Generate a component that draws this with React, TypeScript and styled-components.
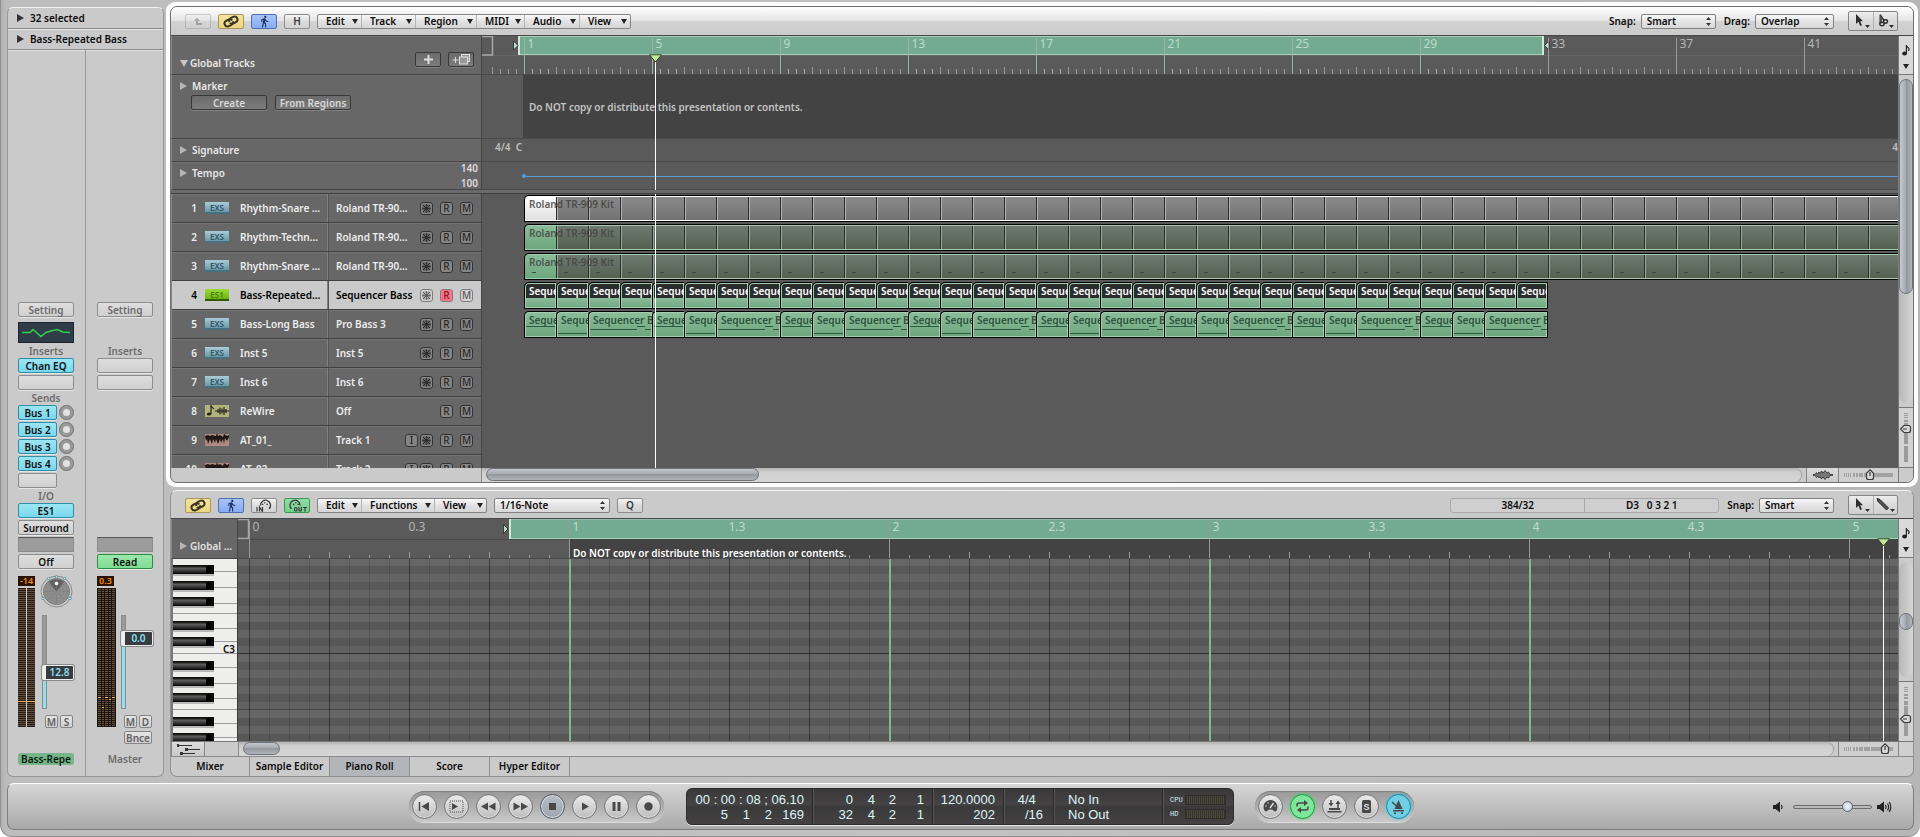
import React from "react";
import styled, { createGlobalStyle, css } from "styled-components";
import { MdDirectionsWalk } from "react-icons/md";

const UI_FONT = `"Noto Sans", "Open Sans", sans-serif`;
const LCD_FONT = `"Liberation Sans", Arial, sans-serif`;

const C = {
  panel: "#cacaca",
  header: "#676767",
  headerLine: "#454545",
  lane: "#5a5a5a",
  laneLine: "#4a4a4a",
  marker: "#434343",
  cycle: "#73ab92",
  cycleEdge: "#a5cfbb",
  text: "#0c0c0c",
};

const GlobalStyle = createGlobalStyle`
  * { box-sizing: border-box; }
  html, body { margin: 0; background: #fff; }
  body { font: 600 10px/12px ${UI_FONT}; color: ${C.text}; }
  button, input, select { font: inherit; color: inherit; margin: 0; }
  button { cursor: pointer; }
  ul { list-style: none; margin: 0; padding: 0; }
`;

/* ---------- frame ---------- */

const Window = styled.main`
  height: 100vh;
  min-height: 760px;
  display: flex;
  flex-direction: column;
  gap: 6px;
  padding: 2px 2px 6px 6px;
  border: solid #8f8f8f;
  border-width: 0 0 1px 1px;
  border-radius: 0 0 12px 12px;
  background: linear-gradient(90deg, #b2b2b2, #bdbdbd 6px, #c2c2c2 50%, #b6b6b6);
  overflow: hidden;
`;

const Workspace = styled.div`
  flex: 1;
  min-height: 0;
  display: flex;
  gap: 2px;
`;

const Editors = styled.div`
  flex: 1;
  min-width: 0;
  display: flex;
  flex-direction: column;
  gap: 3px;
`;

/* ---------- shared controls ---------- */

const Row = styled.div<{ $gap?: number }>`
  display: flex;
  align-items: center;
  gap: ${(p) => p.$gap ?? 0}px;
`;

const Triangle = styled.i<{ $dir?: "down" | "right"; $color?: string }>`
  width: 0;
  height: 0;
  flex: none;
  border-style: solid;
  ${(p) =>
    p.$dir === "down"
      ? css`border-width: 7px 4px 0; border-color: ${p.$color ?? "#333"} transparent transparent;`
      : css`border-width: 4px 0 4px 7px; border-color: transparent transparent transparent ${p.$color ?? "#333"};`}
`;

const tints: Record<string, string> = {
  plain: "linear-gradient(#f4f4f4, #dcdcdc 50%, #d2d2d2)",
  yellow: "linear-gradient(#f3e3a0, #ecd67c)",
  blue: "linear-gradient(#a9c3f5, #86acf5)",
  green: "linear-gradient(#94dba6, #6fd089)",
};
const edges: Record<string, string> = {
  plain: "#8c8c8c",
  yellow: "#a8975c",
  blue: "#4f6fb5",
  green: "#3d9858",
};

const ToolButton = styled.button<{ $tint?: string; $faded?: boolean }>`
  width: 26px;
  height: 15px;
  padding: 0;
  display: grid;
  place-items: center;
  border: 1px solid ${(p) => edges[p.$tint ?? "plain"]};
  border-radius: 2px;
  background: ${(p) => tints[p.$tint ?? "plain"]};
  color: #3a3a3a;
  opacity: ${(p) => (p.$faded ? 0.4 : 1)};
`;

const MenuBar = styled.div`
  display: flex;
  height: 15px;
  border: 1px solid #858585;
  border-radius: 2px;
  background: linear-gradient(#f8f8f8, #e2e2e2 50%, #d6d6d6);
`;

const MenuButton = styled.button<{ $w: number }>`
  width: ${(p) => p.$w}px;
  padding: 0 3px 0 8px;
  display: flex;
  align-items: center;
  justify-content: space-between;
  border: 0;
  border-right: 1px solid #b4b4b4;
  background: none;
  &:last-child { border-right: 0; }
`;

const MenuArrow = styled.i`
  border: solid transparent;
  border-width: 5px 3px 0;
  border-top-color: #222;
`;

const SelectBox = styled.span<{ $w: number }>`
  position: relative;
  display: block;
  width: ${(p) => p.$w}px;
  height: 15px;
  svg { position: absolute; right: 5px; top: 3px; pointer-events: none; }
  select {
    appearance: none;
    display: block;
    width: 100%;
    height: 15px;
    padding: 0 14px 0 5px;
    border: 1px solid #808080;
    border-radius: 2px;
    background: linear-gradient(#f8f8f8, #e4e4e4 50%, #d8d8d8);
  }
`;

const FieldLabel = styled.label`
  display: flex;
  align-items: center;
  gap: 5px;
`;

const ToolPair = styled.div`
  display: flex;
  width: 50px;
  height: 20px;
  border: 1px solid #858585;
  border-radius: 2px;
  background: linear-gradient(#ededed, #dadada 50%, #cfcfcf);
  button {
    flex: 1;
    padding: 0;
    border: 0;
    background: none;
    display: grid;
    place-items: center;
  }
  button + button { border-left: 1px solid #b0b0b0; }
`;

/* ---------- icons ---------- */

const LinkIcon = () => (
  <svg width="16" height="13" viewBox="0 0 16 13" fill="none">
    <g stroke="#3b3420" strokeWidth="2">
      <rect x="1.500" y="4.800" width="8.500" height="6" rx="3" transform="rotate(-25 6 8)" />
      <rect x="6" y="2.200" width="8.500" height="6" rx="3" transform="rotate(-25 10 5)" />
    </g>
    <path d="M5 8.300l6-3.200" stroke="#efe0a0" strokeWidth="1" />
  </svg>
);
const UpIcon = () => (
  <svg width="10" height="9" viewBox="0 0 10 9" fill="none" stroke="#555" strokeWidth="2">
    <path d="M9 7H4V3" />
    <path d="M4 .5L1 4h6z" fill="#555" stroke="none" />
  </svg>
);
const WalkIcon = () => <MdDirectionsWalk size={13} color="#1c3364" />;
const MidiIcon = ({ dir }: { dir: "in" | "out" }) => (
  <svg width="20" height="13" viewBox="0 0 20 13" fill="none" stroke="#3a3a3a" strokeWidth="1.300">
    {dir === "in" ? (
      <>
        <path d="M6.500 6.500A5 5 0 1 1 15 9.800" />
        <path d="M3 8v4.500M5.500 12.500V8l3 4.500V8" strokeWidth="1.200" />
      </>
    ) : (
      <>
        <path d="M4.500 9.800A5 5 0 1 1 13 6.500" />
        <rect x="7.500" y="8.500" width="2.500" height="3.500" rx="1" strokeWidth="1.100" />
        <path d="M12 8v3.500q1.200 1 2.400 0V8M16 8.500h4M18 8.500v4" strokeWidth="1.200" />
      </>
    )}
    <g fill="#3a3a3a" stroke="none" transform={dir === "in" ? "translate(2 0)" : undefined}>
      <circle cx="8.800" cy="3.800" r=".8" />
      <circle cx="6.600" cy="5.400" r=".8" />
      <circle cx="11.200" cy="5.400" r=".8" />
    </g>
  </svg>
);
const Stepper = () => (
  <svg width="5" height="9" viewBox="0 0 5 9" fill="#333">
    <path d="M2.500 0L5 3H0zM2.500 9L5 6H0z" />
  </svg>
);
const PointerIcon = () => (
  <svg width="20" height="16" viewBox="0 0 20 16" fill="#2e2e2e">
    <path d="M5 1v10l2.400-2.200L9.200 13l1.800-.8-1.800-4H12z" />
    <path d="M14 12h5l-2.500 3z" />
  </svg>
);
const ScissorsIcon = () => (
  <svg width="20" height="16" viewBox="0 0 20 16" fill="none" stroke="#2e2e2e" strokeWidth="1.400">
    <path d="M5.500 1.500v8.500M5.500 2.500L9.500 8" />
    <path d="M4.500 1.500l3 4-1 5h-2z" fill="#555" stroke="none" />
    <ellipse cx="7" cy="11" rx="2.200" ry="1.700" />
    <ellipse cx="10.500" cy="8.500" rx="2" ry="1.700" />
    <path d="M14 12h5l-2.500 3z" fill="#2e2e2e" stroke="none" />
  </svg>
);
const PencilIcon = () => (
  <svg width="20" height="16" viewBox="0 0 20 16">
    <path d="M2 1.500l1 3 8.500 8.500 2-2L5 2.500z" fill="#555" stroke="#222" />
    <path d="M15 12h5l-2.500 3z" fill="#2e2e2e" />
  </svg>
);
const FreezeIcon = () => (
  <svg width="9" height="9" viewBox="0 0 9 9" stroke="currentColor" fill="none">
    <path d="M4.500 0v9M0 4.500h9" strokeWidth=".8" />
    <path d="M1 1l7 7M8 1L1 8" strokeWidth="1.200" />
    <path d="M3 .5l1.500 1.500L6 .5M3 8.500L4.500 7 6 8.500M.5 3L2 4.500.5 6M8.500 3L7 4.500 8.500 6" strokeWidth=".9" />
  </svg>
);
const NoteIcon = () => (
  <svg width="8" height="12" viewBox="0 0 8 12">
    <ellipse cx="2.600" cy="9.500" rx="2.400" ry="1.900" fill="#222" />
    <path d="M4.400 9.500V1q.4 2 2 2.800 1.200 1.200 0 3" stroke="#222" strokeWidth="1.200" fill="none" />
  </svg>
);
const WaveIcon = () => (
  <svg width="20" height="10" viewBox="0 0 20 10">
    <path
      d="M0 4.600h2l1.500-2 1 1.500L6 2l1 1.500L8.500 1l1.500 2L12 .5l2 2.500 1.500-1 1.500 2.600h3v.8h-3L15.500 8 14 7l-2 2.500L10 7 8.500 9 7 6.500 6 8 4.500 6l-1 1.500-1.500-2H0z"
      fill="#777"
      stroke="#3a3a3a"
      strokeWidth=".9"
    />
  </svg>
);
const SpeakerIcon = ({ waves }: { waves: number }) => (
  <svg width="15" height="12" viewBox="0 0 15 12" fill="none" stroke="#222" strokeWidth="1.200">
    <path d="M0 4h2.500L7 .5v11L2.500 8H0z" fill="#222" stroke="none" />
    <path d="M8.500 4q1.200 2 0 4" />
    {waves > 1 && <path d="M10.500 2.500q2.200 3.500 0 7M12.300 1q3 5 0 10" />}
  </svg>
);

/* ---------- inspector ---------- */

const Inspector = styled.aside`
  width: 157px;
  margin-top: 5px;
  display: flex;
  flex-direction: column;
  border: 1px solid #979797;
  border-top-color: #f2f2f2;
  border-radius: 6px;
  background: ${C.panel};
`;

const Disclosure = styled.button`
  height: 21px;
  padding: 0 0 1px 9px;
  display: flex;
  align-items: center;
  gap: 6px;
  border: 0;
  border-bottom: 1px solid #8a8a8a;
  background: none;
  box-shadow: 0 1px #e2e2e2;
`;

const Channels = styled.div`
  flex: 1;
  display: grid;
  grid-template-columns: 77px 1fr;
  align-items: end;
`;

const Channel = styled.section`
  display: grid;
  height: 100%;
  padding: 0 10px 11px;
  align-content: end;
  align-items: start;
  grid-template-columns: 56px;
  grid-template-rows: 20px 23px 13px 17px 17px 13px 17px 17px 17px 17px 17px 13px 17px 17px 17px 21px 178px 12px;
  & + & { border-left: 1px solid #9a9a9a; padding-left: 11px; }
`;

const Slot = styled.button<{ $row: number; $kind?: "cyan" | "green" | "dim" | "short" }>`
  grid-row: ${(p) => p.$row};
  width: ${(p) => (p.$kind === "short" ? 39 : 56)}px;
  height: 15px;
  padding: 0;
  border: 1px solid #8d8d8d;
  border-radius: 2px;
  background: linear-gradient(#dedede, #d0d0d0);
  box-shadow: 0 1px #e6e6e6;
  color: ${(p) => (p.$kind === "dim" ? "#6c6c6c" : "#111")};
  line-height: 12px;
  white-space: nowrap;
  ${(p) => p.$kind === "cyan" && css`background: linear-gradient(#9be6f4, #7bd7ec); border-color: #2f8fa8;`}
  ${(p) => p.$kind === "green" && css`background: linear-gradient(#9be8ab, #7fdc93); border-color: #2c8c45;`}
`;

const Caption = styled.span<{ $row: number }>`
  grid-row: ${(p) => p.$row};
  line-height: 13px;
  text-align: center;
  color: #6c6c6c;
`;

const SendRow = styled.div<{ $row: number }>`
  grid-row: ${(p) => p.$row};
  display: flex;
  gap: 2px;
`;
const SendButton = styled(Slot)`
  width: 39px;
`;
const SendKnob = styled.span`
  width: 15px;
  height: 15px;
  border: 4px solid #999;
  border-radius: 50%;
  background: #e2e2e2;
  outline: 1px solid #7b7b7b;
  outline-offset: -1px;
`;

const Well = styled.div<{ $row: number }>`
  grid-row: ${(p) => p.$row};
  height: 15px;
  border: 1px solid #8c8c8c;
  border-top-color: #555;
  background: #9c9c9c;
`;

const EqThumb = styled.div`
  grid-row: 2;
  height: 21px;
  background: #303c48;
  border: 1px solid #1d262e;
`;

const FaderArea = styled.div`
  grid-row: 17;
  display: flex;
  gap: 5px;
`;
const MeterColumn = styled.div`
  width: 17px;
  padding-top: 1px;
`;
const Peak = styled.output`
  display: block;
  height: 10px;
  margin-bottom: 2px;
  background: #2a1200;
  color: #f08a10;
  font-size: 9px;
  line-height: 10px;
  text-align: center;
`;
const Meters = styled.div`
  display: flex;
  gap: 1px;
  height: 139px;
`;
const Meter = styled.div<{ $peak: number }>`
  flex: 1;
  background:
    linear-gradient(#ffb050, #ffb050) 0 ${(p) => p.$peak}px / 100% 1px no-repeat,
    repeating-linear-gradient(#241a14 0 1px, #65513f 1px 2px);
`;
const DenseMeters = styled(Meters)`
  width: 19px;
  padding: 0 1px;
  background: #1b120c;
`;
const FaderColumn = styled.div`
  flex: 1;
`;
const KnobSlot = styled.div`
  height: 40px;
`;
const Fader = styled.div<{ $top: number }>`
  position: relative;
  width: 5px;
  height: 94px;
  margin: 0 0 6px 2px;
  border: 1px solid #8b8b8b;
  background: linear-gradient(#9a9a9a ${(p) => p.$top}px, #8fdfee ${(p) => p.$top}px);
  input {
    position: absolute;
    left: -2px;
    top: 0;
    width: 30px;
    height: 94px;
    opacity: 0;
    writing-mode: vertical-lr;
    direction: rtl;
  }
`;
const FaderCap = styled.output<{ $top: number }>`
  position: absolute;
  left: -1px;
  top: ${(p) => p.$top}px;
  width: 32px;
  height: 15px;
  border: 1px solid #ededed;
  border-left-width: 4px;
  border-radius: 2px;
  background: #363c40;
  box-shadow: 0 0 0 1px #8a8a8a;
  color: #8fdff0;
  line-height: 13px;
  text-align: center;
`;
const SmallButtons = styled.div`
  display: flex;
  justify-content: flex-end;
  gap: 2px;
  padding-right: 1px;
  margin-bottom: 3px;
`;
const SmallButton = styled.button<{ $wide?: boolean }>`
  width: ${(p) => (p.$wide ? 28 : 13)}px;
  height: 13px;
  padding: 0;
  border: 1px solid #858585;
  border-radius: 2px;
  background: linear-gradient(#e4e4e4, #d0d0d0);
  color: #606060;
  line-height: 10px;
`;
const ChannelName = styled.span<{ $active?: boolean }>`
  grid-row: 18;
  border-radius: 3px;
  background: ${(p) => (p.$active ? "#76b489" : "none")};
  color: ${(p) => (p.$active ? "#0d1a10" : "#6c6c6c")};
  text-align: center;
`;

const PanKnob = () => (
  <svg width="33" height="33" viewBox="0 0 33 33" fill="none">
    <circle cx="16.500" cy="16.500" r="15.500" stroke="#8a8a8a" />
    <circle cx="16.500" cy="16.500" r="13" fill="#8f8f8f" stroke="#777" />
    <path d="M16.500 16.500L9 7a13 13 0 0 1 15 0z" fill="#5b5b5b" />
    {[4, 7, 10].map((r) => (
      <circle key={r} cx="16.500" cy="16.500" r={r} stroke="#7a7a7a" strokeWidth=".6" />
    ))}
    <path d="M16.500 4v25M4 16.500h25M8 8l17 17M25 8L8 25" stroke="#7c7c7c" strokeWidth=".5" />
    <circle cx="16.500" cy="8.500" r="1.800" fill="#fff" />
    {[[16.5, 2], [8.5, 3.5], [24.5, 3.5], [3, 23.5], [30, 23.5]].map(([x, y]) => (
      <circle key={`${x}-${y}`} cx={x} cy={y} r="1.200" fill="#e8e8e8" stroke="#3f90a5" strokeWidth=".8" />
    ))}
  </svg>
);

function InspectorPanel() {
  return (
    <Inspector>
      <Disclosure><Triangle />32 selected</Disclosure>
      <Disclosure><Triangle />Bass-Repeated Bass</Disclosure>
      <Channels>
        <Channel aria-label="Bass-Repeated">
          <Slot $row={1} $kind="dim">Setting</Slot>
          <EqThumb>
            <svg width="54" height="19" viewBox="0 0 54 19" fill="none" stroke="#2fd04a" strokeWidth="1.500">
              <path d="M3 9.500h8l3-3 8 7 5-4 5-1.500 6-1.500 6 2.500 7 .5" />
            </svg>
          </EqThumb>
          <Caption $row={3}>Inserts</Caption>
          <Slot $row={4} $kind="cyan">Chan EQ</Slot>
          <Slot $row={5} aria-label="Empty insert" />
          <Caption $row={6}>Sends</Caption>
          {[1, 2, 3, 4].map((n) => (
            <SendRow key={n} $row={6 + n}>
              <SendButton $row={1} $kind="cyan">Bus {n}</SendButton>
              <SendKnob />
            </SendRow>
          ))}
          <Slot $row={11} $kind="short" aria-label="Empty send" />
          <Caption $row={12}>I/O</Caption>
          <Slot $row={13} $kind="cyan">ES1</Slot>
          <Slot $row={14}>Surround</Slot>
          <Well $row={15} />
          <Slot $row={16}>Off</Slot>
          <FaderArea>
            <MeterColumn>
              <Peak>-14</Peak>
              <Meters><Meter $peak={113} /><Meter $peak={113} /></Meters>
            </MeterColumn>
            <FaderColumn>
              <KnobSlot><PanKnob /></KnobSlot>
              <Fader $top={58}>
                <FaderCap $top={49}>12.8</FaderCap>
                <input type="range" aria-label="Bass volume" defaultValue={40} />
              </Fader>
              <SmallButtons><SmallButton>M</SmallButton><SmallButton>S</SmallButton></SmallButtons>
            </FaderColumn>
          </FaderArea>
          <ChannelName $active>Bass-Repe</ChannelName>
        </Channel>
        <Channel aria-label="Master">
          <Slot $row={1} $kind="dim">Setting</Slot>
          <Caption $row={3}>Inserts</Caption>
          <Slot $row={4} aria-label="Empty insert 1" />
          <Slot $row={5} aria-label="Empty insert 2" />
          <Well $row={15} />
          <Slot $row={16} $kind="green">Read</Slot>
          <FaderArea>
            <MeterColumn>
              <Peak>0.3</Peak>
              <DenseMeters>
                {[109, 119, 109, 111, 109].map((p, i) => <Meter key={i} $peak={p} />)}
              </DenseMeters>
            </MeterColumn>
            <FaderColumn>
              <KnobSlot />
              <Fader $top={28}>
                <FaderCap $top={15}>0.0</FaderCap>
                <input type="range" aria-label="Master volume" defaultValue={75} />
              </Fader>
              <SmallButtons><SmallButton>M</SmallButton><SmallButton>D</SmallButton></SmallButtons>
              <SmallButtons><SmallButton $wide>Bnce</SmallButton></SmallButtons>
            </FaderColumn>
          </FaderArea>
          <ChannelName>Master</ChannelName>
        </Channel>
      </Channels>
    </Inspector>
  );
}

/* ---------- scroll and zoom strips ---------- */

const thumb = css`
  border: 1px solid #6f7378;
  border-radius: 8px;
`;
const HScroll = styled.div<{ $gap: number }>`
  flex: 1;
  min-width: 0;
  margin-right: ${(p) => p.$gap}px;
  padding: 0 4px;
  border-left: 1px solid #8a8a8a;
  border-radius: 0 8px 8px 0;
  background: linear-gradient(#b4b4b4, #cfcfcf 30%, #d6d6d6);
  box-shadow: 1px 0 #9a9a9a;
`;
const HThumb = styled.div<{ $w: number }>`
  width: ${(p) => p.$w}px;
  height: 13px;
  ${thumb}
  background: linear-gradient(#c3c6cb, #a7aab1 45%, #94989f 50%, #b1b4ba);
`;
const ScrollStrip = styled.div`
  flex: none;
  display: flex;
  height: 14px;
  background: ${C.panel};
`;
const StripCell = styled.div<{ $w: number }>`
  position: relative;
  flex: none;
  width: ${(p) => p.$w}px;
  display: grid;
  place-items: center;
  border-left: 1px solid #858585;
  background: #cfcfcf;
  input { position: absolute; inset: 0; width: 100%; height: 100%; margin: 0; opacity: 0; }
`;
const StripButton = styled.button<{ $w: number }>`
  flex: none;
  width: ${(p) => p.$w}px;
  padding: 0;
  display: grid;
  place-items: center;
  border: 0;
  border-left: 1px solid #858585;
  background: linear-gradient(#dcdcdc, #c8c8c8);
`;
const SideColumn = styled.div`
  flex: none;
  width: 15px;
  display: flex;
  flex-direction: column;
  border-left: 1px solid #7a7a7a;
  background: #cbcbcb;
`;
const NoteBox = styled.button`
  height: 39px;
  padding: 8px 0 5px;
  display: flex;
  flex-direction: column;
  align-items: center;
  justify-content: space-between;
  border: 0;
  border-bottom: 1px solid #7a7a7a;
  background: #d9d9d9;
`;
const VScroll = styled.div<{ $pad: number }>`
  flex: 1;
  min-height: 0;
  padding-top: ${(p) => p.$pad}px;
  margin: 4px 0;
  border-radius: 7px;
  background: linear-gradient(90deg, #b8b8b8, #d6d6d6);
`;
const VThumb = styled.div<{ $h: number }>`
  height: ${(p) => p.$h}px;
  ${thumb}
  background: linear-gradient(90deg, #c6c9ce, #a5a8ae 50%, #92969d 52%, #b3b6bc);
`;
const VZoom = styled.div`
  position: relative;
  height: 60px;
  display: grid;
  place-items: center;
  border-top: 1px solid #7a7a7a;
  background: #d3d3d3;
  input { position: absolute; inset: 0; width: 100%; height: 100%; margin: 0; opacity: 0; writing-mode: vertical-lr; }
`;
const Corner = styled.div`
  height: 15px;
  border-top: 1px solid #7a7a7a;
`;

const HZoomArt = ({ at }: { at: number }) => (
  <svg width="50" height="12" viewBox="0 0 50 12">
    <g fill="#a2a2a2">
      {[0, 2, 4, 6].map((x) => <rect key={x} x={x} y="4" width="1" height="4" />)}
      {[9, 12].map((x) => <rect key={x} x={x} y="4" width="2" height="4" />)}
      <rect x="15" y="4" width="4" height="4" />
      <rect x="20" y="4" width="6" height="4" />
      <rect x="27" y="4" width="22" height="4" />
    </g>
    <path d={`M${at} .8l-3.500 3.500v4.200q0 2 2 2h3q2 0 2-2V4.300zM${at} 3v4`} fill="#d8d8d8" stroke="#3c3c3c" strokeWidth="1.200" />
  </svg>
);
const VZoomArt = ({ at }: { at: number }) => (
  <svg width="14" height="50" viewBox="0 0 14 50">
    <g fill="#9c9c9c">
      {[0, 2, 4, 7, 10].map((y) => <rect key={y} x="5" y={y} width="4" height={y > 5 ? 2 : 1} />)}
      <rect x="5" y="14" width="4" height="4" />
      <rect x="5" y="19" width="4" height="12" />
      <rect x="5" y="33" width="4" height="16" />
    </g>
    <path d={`M1.500 ${at}l3.500 -3.500h4.500q2 0 2 2v3q0 2 -2 2H5zM4 ${at}h4`} fill="#d8d8d8" stroke="#3c3c3c" strokeWidth="1.200" />
  </svg>
);

/* ---------- arrange window ---------- */

const ArrangeFrame = styled.section`
  flex: 1;
  min-height: 0;
  display: flex;
  padding: 4px;
  border-radius: 9px;
  background: #fdfdfd;
`;
const ArrangeInner = styled.div`
  flex: 1;
  min-width: 0;
  display: flex;
  flex-direction: column;
  border: 1px solid #6e6e6e;
  border-radius: 7px;
  background: ${C.panel};
  overflow: hidden;
`;
const Toolbar = styled.header<{ $bright?: boolean }>`
  flex: none;
  height: ${(p) => (p.$bright ? 29 : 28)}px;
  padding: ${(p) => (p.$bright ? 0 : 1)}px 15px 0 14px;
  display: flex;
  align-items: center;
  gap: 7px;
  border-bottom: 1px solid #484848;
  background: ${(p) => (p.$bright ? "linear-gradient(#fff, #e4e4e4 50%, #d2d2d2 52%, #cbcbcb)" : C.panel)};
`;
const ToolbarEnd = styled.div`
  margin-left: auto;
  display: flex;
  align-items: center;
  gap: 8px;
  ${ToolPair} { margin-left: 6px; }
`;
const EditorBody = styled.div`
  flex: 1;
  min-height: 0;
  display: flex;
`;
const Stack = styled.div<{ $w?: number }>`
  position: relative;
  ${(p) => (p.$w ? css`flex: none; width: ${p.$w}px;` : css`flex: 1; min-width: 0;`)}
  display: flex;
  flex-direction: column;
`;

const GlobalRow = styled.div<{ $h: number }>`
  flex: none;
  height: ${(p) => p.$h}px;
  padding: 5px 7px 0 8px;
  border-bottom: 1px solid ${C.headerLine};
  border-right: 1px solid ${C.headerLine};
  border-left: 1px solid #888;
  box-shadow: inset 0 1px #727272;
  background: ${C.header};
  color: #e8e8e8;
`;
const GlobalTop = styled(GlobalRow)`
  display: flex;
  align-items: center;
  gap: 7px;
  padding-top: 9px;
  ${Row}:first-child { flex: 1; padding-top: 7px; }
`;
const DarkButton = styled.button<{ $w: number }>`
  width: ${(p) => p.$w}px;
  height: 15px;
  padding: 0;
  display: grid;
  place-items: center;
  border: 1px solid #383838;
  border-radius: 2px;
  background: linear-gradient(#6b6b6b, #7b7b7b);
  box-shadow: 0 1px #808080;
  color: #d8d8d8;
  line-height: 12px;
`;
const MarkerButtons = styled.div`
  display: flex;
  gap: 8px;
  padding: 3px 0 0 11px;
`;
const TempoRow = styled(GlobalRow)`
  display: flex;
  justify-content: space-between;
  align-items: flex-start;
  padding-top: 0;
  padding-right: 3px;
  ${Row} { padding-top: 5px; }
`;
const TempoScale = styled.div`
  display: grid;
  gap: 3px;
  text-align: right;
  color: #dcdcdc;
`;
const Band = styled.div`
  flex: none;
  position: relative;
  z-index: 3;
  height: 4px;
  background: #6b6b6b;
  border-bottom: 1px solid #3d3d3d;
`;

const TrackList = styled.ul`
  flex: 1;
  min-height: 0;
  overflow: hidden;
  background: ${C.header};
  border-left: 1px solid #888;
  border-right: 1px solid ${C.headerLine};
`;
const TrackRow = styled.li<{ $selected?: boolean }>`
  height: 29px;
  padding: 0 8px 0 0;
  display: grid;
  grid-template-columns: 25px 32px 107px 1fr auto;
  align-items: center;
  border-bottom: 1px solid #404040;
  box-shadow: inset 0 1px #757575;
  color: #ededed;
  ${(p) => p.$selected && css`background: ${C.panel}; color: #000; box-shadow: none;`}
`;
const TrackNumber = styled.span`
  text-align: right;
`;
const TrackName = styled.span`
  height: 28px;
  line-height: 28px;
  white-space: nowrap;
  padding-left: 11px;
  margin-right: 8px;
  border-right: 1px solid #808080;
  box-shadow: 1px 0 #555;
`;
const TrackTarget = styled.span`
  white-space: nowrap;
`;
const TrackButtons = styled.div`
  display: flex;
  gap: 7px;
`;
const Tiny = styled.button<{ $on?: boolean; $light?: boolean; $tight?: boolean }>`
  width: 13px;
  height: 13px;
  padding: 0;
  margin-right: ${(p) => (p.$tight ? -5 : 0)}px;
  display: grid;
  place-items: center;
  border: 1px solid ${(p) => (p.$light ? "#7d7d7d" : "#333")};
  border-radius: 3px;
  background: ${(p) => (p.$on ? "#ff7389" : p.$light ? "#d2d2d2" : "#858585")};
  color: ${(p) => (p.$on ? "#7c1222" : p.$light ? "#5a5a5a" : "#2a2a2a")};
  line-height: 11px;
  font-weight: 500;
`;
const BadgeSlot = styled.span`
  display: grid;
  padding-left: 8px;
`;
const Badge = styled.span<{ $green?: boolean }>`
  height: 12px;
  border-bottom: 2px solid ${(p) => (p.$green ? "#2f5a08" : "#47707f")};
  background: ${(p) => (p.$green ? "linear-gradient(#9ada3a, #6fb512)" : "linear-gradient(#a9cbd8, #6b98aa)")};
  color: ${(p) => (p.$green ? "#4a8010" : "#345562")};
  font-size: 8px;
  line-height: 11px;
  text-align: center;
`;
const WaveBadge = ({ rewire }: { rewire?: boolean }) => (
  <svg width="24" height="14" viewBox="0 0 24 14">
    <rect y="1" width="24" height="12" fill={rewire ? "#b3b37c" : "#b08a80"} />
    {rewire ? (
      <g>
        <ellipse cx="4" cy="10" rx="2.200" ry="1.500" fill="#222" />
        <path d="M6 10V1q.5 2.500 3 4M10 7h14M13 5v4M15 3.500v7M17 4.500v5M19 3v8M21 5v4" stroke="#222" strokeWidth="1.200" fill="none" />
      </g>
    ) : (
      <path d="M0 3l1 5 1-2 1 5 2-5 1 3 1 2 1-5 2 4 1-4 2 5 2-5 1 4 2-4 1 5 1-6 2 3 2-4V2l-2 1-3-2-1 3-3-2-2 1-1-3-1 3-4-1-2 1-2-1z" fill="#1e1614" />
    )}
  </svg>
);

type Track = { n: number; badge: "EXS" | "ES1" | "rewire" | "audio"; name: string; target: string };
const tracks: Track[] = [
  { n: 1, badge: "EXS", name: "Rhythm-Snare ...", target: "Roland TR-90..." },
  { n: 2, badge: "EXS", name: "Rhythm-Techn...", target: "Roland TR-90..." },
  { n: 3, badge: "EXS", name: "Rhythm-Snare ...", target: "Roland TR-90..." },
  { n: 4, badge: "ES1", name: "Bass-Repeated...", target: "Sequencer Bass" },
  { n: 5, badge: "EXS", name: "Bass-Long Bass", target: "Pro Bass 3" },
  { n: 6, badge: "EXS", name: "Inst 5", target: "Inst 5" },
  { n: 7, badge: "EXS", name: "Inst 6", target: "Inst 6" },
  { n: 8, badge: "rewire", name: "ReWire", target: "Off" },
  { n: 9, badge: "audio", name: "AT_01_", target: "Track 1" },
  { n: 10, badge: "audio", name: "AT_02_", target: "Track 2" },
];

const Ruler = styled.div<{ $h: number }>`
  position: relative;
  flex: none;
  height: ${(p) => p.$h}px;
  overflow: hidden;
  background: ${C.lane};
  border-bottom: 1px solid ${C.laneLine};
  svg { display: block; }
  text { font: 12px ${UI_FONT}; }
`;

const ArrangeRuler = () => {
  const bars = Array.from({ length: 46 }, (_, i) => i);
  return (
    <Ruler $h={39}>
      <svg width="100%" height="38">
        <rect y="19" width="100%" height="1" fill="#666" />
        <path d="M0 0.500H10.500V19H0" fill="none" stroke="#a8a8a8" strokeWidth="1.500" />
        <rect x="38" y="0" width="1022" height="19" fill={C.cycle} />
        <path d="M38 .5h1022M38 18.500h1022" stroke={C.cycleEdge} />
        <path d="M37 0v19M1061 0v19" stroke="#cfe8da" strokeWidth="2" />
        <path d="M31.500 5l4.500 4.500-4.500 4.500z" fill="#b8e0c8" stroke="#222" strokeWidth=".8" />
        <path d="M1067 5l-4.500 4.500 4.500 4.500z" fill="#b8e0c8" stroke="#222" strokeWidth=".8" />
        {bars.map((b) => {
          const x = 10.5 + b * 32;
          const major = b % 4 === 1;
          return (
            <g key={b} stroke={major && b < 33 ? "#9fb0a6" : "#9a9a9a"}>
              <path d={`M${x} ${major ? 2 : 31}V38`} />
              {[8, 16, 24].map((d) => <path key={d} d={`M${x + d} 33V38`} />)}
              {major && (
                <text x={x + 3} y="12" fill={b < 33 ? "#bddccb" : "#b5b5b5"} stroke="none">{b}</text>
              )}
            </g>
          );
        })}
      </svg>
    </Ruler>
  );
};

const Playhead = styled.div<{ $x: number; $top: number }>`
  position: absolute;
  z-index: 2;
  top: ${(p) => p.$top}px;
  bottom: 0;
  left: ${(p) => p.$x}px;
  width: 1px;
  background: #fff;
  pointer-events: none;
  svg { position: absolute; left: -6px; top: -1px; }
`;
const PlayheadCap = () => (
  <svg width="13" height="9" viewBox="0 0 13 9">
    <path d="M.5 .8h12L6.500 8z" fill="#c4e89c" stroke="#2d4a22" strokeWidth="1" />
  </svg>
);

const MarkerLane = styled.div`
  flex: none;
  height: 64px;
  padding-left: 41px;
  background: ${C.lane};
  border-bottom: 1px solid ${C.laneLine};
  div { height: 63px; padding-left: 6px; background: ${C.marker}; color: #c4c4c4; line-height: 64px; }
`;
const SignatureLane = styled.div`
  flex: none;
  height: 23px;
  padding: 2px 0 0 13px;
  display: flex;
  justify-content: space-between;
  background: ${C.lane};
  border-bottom: 1px solid ${C.laneLine};
  color: #bfbfbf;
`;
const TempoLane = styled.div`
  flex: none;
  height: 28px;
  padding: 12px 0 0 40px;
  background: ${C.lane};
  border-bottom: 1px solid ${C.laneLine};
  div { display: flex; align-items: center; height: 4px; }
  i { width: 4px; height: 4px; border-radius: 50%; background: #45a0f0; }
  b { flex: 1; height: 1px; background: #5b9bd0; }
`;

const Lanes = styled.div`
  flex: 1;
  min-height: 0;
  overflow: hidden;
  background: ${C.lane};
`;
const Lane = styled.div`
  display: flex;
  height: 29px;
  padding: 1px 0 1px 42px;
`;

const loopTones: Record<string, { head: string; loop: string; edge: string; div: string }> = {
  white: { head: "linear-gradient(#ffffff, #dfdfdf)", loop: "linear-gradient(#8b8b8b, #717171)", edge: "#ffffff", div: "#b4b4b4" },
  green: { head: "linear-gradient(#8cbd9a, #6ca67c)", loop: "linear-gradient(#6f7b72, #53604f 99%)", edge: "#a3cdb0", div: "#93a899" },
};
const LoopRegion = styled.div<{ $tone: string }>`
  flex: 1;
  min-width: 0;
  position: relative;
  border: 1px solid #000;
  border-right: 0;
  border-radius: 5px 0 0 0;
  overflow: hidden;
  background:
    linear-gradient(${(p) => loopTones[p.$tone].edge}, ${(p) => loopTones[p.$tone].edge}) 0 0 / 100% 1px no-repeat,
    linear-gradient(${(p) => loopTones[p.$tone].edge}, ${(p) => loopTones[p.$tone].edge}) 0 100% / 100% 1px no-repeat,
    ${(p) => loopTones[p.$tone].head} 0 0 / 31px 100% no-repeat,
    repeating-linear-gradient(90deg, ${(p) => loopTones[p.$tone].div} 0 1px, transparent 1px 31px, #2c2c2c 31px 32px),
    ${(p) => loopTones[p.$tone].loop};
  color: #444;
  span { position: relative; padding-left: 4px; line-height: 16px; opacity: 0.85; }
`;
const Dashes = styled.div`
  position: absolute;
  left: 0;
  right: 0;
  bottom: 6px;
  height: 1px;
  background: repeating-linear-gradient(90deg, transparent 0 7px, #3c4a40 7px 11px, transparent 11px 32px);
`;
const Clip = styled.div<{ $bars: number; $dark?: boolean }>`
  flex: none;
  position: relative;
  width: ${(p) => p.$bars * 32}px;
  border: 1px solid #000;
  border-right-width: 0;
  box-shadow: inset 0 0 0 1px #a3cdb0;
  border-radius: 5px 0 0 0;
  overflow: hidden;
  white-space: nowrap;
  padding: 1px 1px 0 4px;
  line-height: 15px;
  color: #2e5540;
  background: linear-gradient(#8cbd9a, #6ca67c);
  &:last-child { border-right-width: 1px; }
  ${(p) => p.$dark && css`
    background: linear-gradient(#2b2d2d 15px, #8cbd9a 15px, #6ca67c);
    color: #fff;
  `}
  svg { position: absolute; left: 1px; bottom: 1px; }
`;

const clipShapes = [
  { bars: 1, text: "Seque", notes: "M0 2.500h60" },
  { bars: 1, text: "Seque", notes: "M0 9.500h60" },
  { bars: 2, text: "Sequencer Ba", notes: "M0 5.500h47M47 2.500h8M55 5.500h8" },
];

function ArrangeWindow() {
  return (
    <ArrangeFrame>
      <ArrangeInner>
        <Toolbar $bright>
          <ToolButton $faded aria-label="Leave folder"><UpIcon /></ToolButton>
          <ToolButton $tint="yellow" aria-label="Link"><LinkIcon /></ToolButton>
          <ToolButton $tint="blue" aria-label="Catch"><WalkIcon /></ToolButton>
          <ToolButton>H</ToolButton>
          <MenuBar>
            {([["Edit", 44], ["Track", 54], ["Region", 61], ["MIDI", 48], ["Audio", 55], ["View", 50]] as [string, number][]).map(([t, w]) => (
              <MenuButton key={t} $w={w}>{t}<MenuArrow /></MenuButton>
            ))}
          </MenuBar>
          <ToolbarEnd>
            <FieldLabel>Snap:
              <SelectBox $w={75}><select><option>Smart</option></select><Stepper /></SelectBox>
            </FieldLabel>
            <FieldLabel>Drag:
              <SelectBox $w={79}><select><option>Overlap</option></select><Stepper /></SelectBox>
            </FieldLabel>
            <ToolPair>
              <button aria-label="Pointer tool"><PointerIcon /></button>
              <button aria-label="Scissors tool"><ScissorsIcon /></button>
            </ToolPair>
          </ToolbarEnd>
        </Toolbar>
        <EditorBody>
          <Stack $w={311}>
            <GlobalTop $h={39}>
              <Row $gap={2}><Triangle $dir="down" $color="#c4c4c4" />Global Tracks</Row>
              <DarkButton $w={26} aria-label="Add global track">
                <svg width="9" height="9" stroke="#ddd" strokeWidth="2"><path d="M4.500 0v9M0 4.500h9" /></svg>
              </DarkButton>
              <DarkButton $w={26} aria-label="Configure global tracks">
                <svg width="18" height="11" fill="#999" stroke="#ddd"><path d="M3.500 3v6M.5 6h6" /><rect x="9.500" y=".5" width="8" height="7" /><rect x="7.500" y="3" width="8" height="7" /></svg>
              </DarkButton>
            </GlobalTop>
            <GlobalRow $h={64}>
              <Row $gap={5}><Triangle $color="#b4b4b4" />Marker</Row>
              <MarkerButtons>
                <DarkButton $w={76}>Create</DarkButton>
                <DarkButton $w={76}>From Regions</DarkButton>
              </MarkerButtons>
            </GlobalRow>
            <GlobalRow $h={23}><Row $gap={5}><Triangle $color="#b4b4b4" />Signature</Row></GlobalRow>
            <TempoRow $h={28}>
              <Row $gap={5}><Triangle $color="#b4b4b4" />Tempo</Row>
              <TempoScale><span>140</span><span>100</span></TempoScale>
            </TempoRow>
            <Band />
            <TrackList>
              {tracks.map((t) => {
                const light = t.n === 4;
                return (
                  <TrackRow key={t.n} $selected={light}>
                    <TrackNumber>{t.n}</TrackNumber>
                    <BadgeSlot>
                      {t.badge === "EXS" || t.badge === "ES1" ? (
                        <Badge $green={t.badge === "ES1"}>{t.badge}</Badge>
                      ) : (
                        <WaveBadge rewire={t.badge === "rewire"} />
                      )}
                    </BadgeSlot>
                    <TrackName>{t.name}</TrackName>
                    <TrackTarget>{t.target}</TrackTarget>
                    <TrackButtons>
                      {t.badge === "audio" && <Tiny $tight>I</Tiny>}
                      {t.badge !== "rewire" && <Tiny $light={light} aria-label="Freeze"><FreezeIcon /></Tiny>}
                      <Tiny $light={light} $on={light}>R</Tiny>
                      <Tiny $light={light}>M</Tiny>
                    </TrackButtons>
                  </TrackRow>
                );
              })}
            </TrackList>
          </Stack>
          <Stack>
            <ArrangeRuler />
            <MarkerLane><div>Do NOT copy or distribute this presentation or contents.</div></MarkerLane>
            <SignatureLane><span>4/4&nbsp; C</span><span>4</span></SignatureLane>
            <TempoLane><div><i /><b /></div></TempoLane>
            <Band />
            <Lanes>
              <Lane><LoopRegion $tone="white"><span>Roland TR-909 Kit</span></LoopRegion></Lane>
              <Lane><LoopRegion $tone="green"><span>Roland TR-909 Kit</span></LoopRegion></Lane>
              <Lane><LoopRegion $tone="green"><span>Roland TR-909 Kit</span><Dashes /></LoopRegion></Lane>
              <Lane>
                {Array.from({ length: 32 }, (_, i) => (
                  <Clip key={i} $bars={1} $dark>Seque</Clip>
                ))}
              </Lane>
              <Lane>
                {Array.from({ length: 24 }, (_, i) => {
                  const c = clipShapes[i % 3];
                  return (
                    <Clip key={i} $bars={c.bars}>
                      {c.text}
                      <svg width={c.bars * 32 - 3} height="12" stroke="#2f5a40" fill="none"><path d={c.notes} /></svg>
                    </Clip>
                  );
                })}
              </Lane>
            </Lanes>
            <Playhead $x={173} $top={19}><PlayheadCap /></Playhead>
          </Stack>
          <SideColumn>
            <NoteBox aria-label="Arrange display"><NoteIcon /><MenuArrow /></NoteBox>
            <VScroll $pad={0}><VThumb $h={215} /></VScroll>
            <VZoom><VZoomArt at={16} /><input type="range" aria-label="Arrange vertical zoom" /></VZoom>
            <Corner />
          </SideColumn>
        </EditorBody>
        <FloatStrip>
          <ScrollStrip>
            <StripPad />
            <HScroll $gap={5}><HThumb $w={273} /></HScroll>
            <StripButton $w={32} aria-label="Waveform zoom"><WaveIcon /></StripButton>
            <StripCell $w={60}><HZoomArt at={26} /><input type="range" aria-label="Arrange horizontal zoom" /></StripCell>
          </ScrollStrip>
        </FloatStrip>
      </ArrangeInner>
    </ArrangeFrame>
  );
}

/* The strip shares its row with the corner of the side column. */
const FloatStrip = styled.div`
  margin: -14px 15px 0 0;
  position: relative;
  z-index: 4;
`;
const StripPad = styled.div`
  width: 310px;
`;

/* ---------- piano roll ---------- */

const PianoPanel = styled.section`
  flex: none;
  display: flex;
  flex-direction: column;
  margin: 0 4px;
  border: 1px solid #909090;
  border-top-color: #f4f4f4;
  border-radius: 7px;
  background: ${C.panel};
  overflow: hidden;
`;
const InfoDisplay = styled.div`
  display: flex;
  width: 269px;
  height: 15px;
  border: 1px solid #a9a9a9;
  border-radius: 3px;
  background: #cfcfcf;
  span { flex: 1; text-align: center; line-height: 13px; white-space: pre; }
  span + span { border-left: 1px solid #a9a9a9; }
`;
const RollHeader = styled.div`
  height: 40px;
  padding: 15px 0 0 8px;
  display: flex;
  align-items: center;
  gap: 3px;
  border-left: 1px solid #888;
  border-right: 1px solid ${C.headerLine};
  border-bottom: 1px solid ${C.headerLine};
  background: ${C.header};
  color: #e0e0e0;
  white-space: nowrap;
`;
const Keys = styled.div`
  position: relative;
  height: 182px;
  border-left: 2px solid #777;
  border-right: 1px solid #3a3a3a;
  overflow: hidden;
  svg { display: block; }
`;
const KeyLabel = styled.span`
  position: absolute;
  right: 2px;
  top: 84px;
`;

const OCTAVE = `linear-gradient(
  #666 0 8px, #595959 8px 16px, #646464 16px 24px, #595959 24px 32px, #646464 32px 40px,
  #575757 40px 48px, #626262 48px 55px, #444 55px 56px, #666 56px 64px, #575757 64px 72px,
  #646464 72px 80px, #575757 80px 88px, #616161 88px 95px, #2e2e2e 95px 96px)`;
const barLine = (x: number) => `linear-gradient(#82b592, #82b592) ${x}px 0 / 2px 100% no-repeat`;
const RollGrid = styled.div`
  height: 182px;
  background:
    ${[331, 651, 971, 1291].map(barLine).join(",")},
    linear-gradient(90deg, rgba(0,0,0,.32) 1px, transparent 1px) 11px 0 / 80px 100%,
    linear-gradient(90deg, rgba(0,0,0,.14) 1px, transparent 1px) 11px 0 / 20px 100%,
    ${OCTAVE} 0 -1px / 100% 96px;
`;

const blackRows = [6, 22, 38, 62, 78, 102, 118, 134, 158, 174];
const whiteLines = [12, 28, 44, 54, 69, 82, 94, 108, 124, 139, 150, 164, 178];

const Keyboard = () => (
  <Keys>
    <svg width="64" height="182">
      <defs>
        <linearGradient id="ebony" x1="0" x2="0" y1="0" y2="1">
          <stop offset="0" stopColor="#111" />
          <stop offset=".35" stopColor="#5c5c5c" />
          <stop offset="1" stopColor="#161616" />
        </linearGradient>
      </defs>
      <rect width="64" height="182" fill="#eeeeec" />
      {whiteLines.map((y) => <rect key={y} y={y} width="64" height="1" fill="#9d9d9d" />)}
      {blackRows.map((y) => (
        <g key={y}>
          <rect y={y + 2} width="41" height="9" fill="#000" opacity=".22" />
          <rect y={y} width="41" height="9" fill="#0c0c0c" />
          <rect y={y + 1} width="33" height="7" fill="url(#ebony)" />
          <path d={`M33 ${y + 2}l5 -1v7l-5 -1z`} fill="#000" />
        </g>
      ))}
    </svg>
    <KeyLabel>C3</KeyLabel>
  </Keys>
);

const RollMarker = styled.span`
  position: absolute;
  left: 335px;
  top: 28px;
  color: #fff;
`;

const RollRuler = () => (
  <Ruler $h={40}>
    <svg width="100%" height="39">
      <rect x="332" y="20" width="100%" height="19" fill={C.marker} />
      <rect y="20" width="331" height="1" fill="#4a4a4a" />
      <path d="M0 .5H10.500V19.500H0" fill="none" stroke="#a8a8a8" strokeWidth="1.500" />
      <rect x="272" width="100%" height="20" fill={C.cycle} />
      <rect x="272" width="100%" height="1" fill="#8fbfa8" />
      <rect x="272" y="19" width="100%" height="1" fill={C.cycleEdge} />
      <path d="M272 0v20" stroke="#cfe8da" strokeWidth="2" />
      <path d="M265.500 5.500l4.500 4.500-4.500 4.500z" fill="#b8e0c8" stroke="#222" strokeWidth=".8" />
      {Array.from({ length: 71 }, (_, i) => {
        const x = 11.5 + i * 20;
        const bar = i % 16 === 0;
        const label = i % 8 === 0 && i < 68;
        const n = Math.floor(i / 16);
        const covered = i > 16 && i < 30;
        return (
          <g key={i}>
            {!covered && <path d={`M${x} ${bar ? 2 : i % 4 === 0 ? 33 : 36}V39`} stroke="#9a9a9a" />}
            {label && (
              <text x={bar ? x + 3 : x - 1} y="12" fill={i > 13 ? "#bddccb" : "#b5b5b5"}>{bar ? n : `${n}.3`}</text>
            )}
          </g>
        );
      })}
      <path d="M1611.500 2V39" stroke="#9a9a9a" />
      {[71, 72, 73, 74, 75, 76, 77, 78, 79, 81, 82].map((i) => (
        <path key={i} d={`M${11.5 + i * 20} ${i % 4 === 0 ? 33 : 36}V39`} stroke="#9a9a9a" />
      ))}
      <text x="1449.500" y="12" fill="#bddccb">4.3</text>
      <text x="1614.500" y="12" fill="#bddccb">5</text>
    </svg>
    <RollMarker>Do NOT copy or distribute this presentation or contents.</RollMarker>
  </Ruler>
);

const RollFooter = styled.div`
  display: flex;
  border-top: 1px solid #777;
`;
const RollStrip = styled.div`
  flex: 1;
  border-left: 1px solid #858585;
`;
const RollPad = styled.div`
  width: 33px;
`;
const Tabs = styled.div`
  display: flex;
  height: 20px;
  border-top: 1px solid #8a8a8a;
`;
const Tab = styled.button<{ $on?: boolean }>`
  width: 80px;
  padding: 0 0 2px;
  border: 0;
  border-right: 1px solid #8f8f8f;
  background: ${(p) => (p.$on ? "#b4b5ba" : "none")};
  &:first-child { width: 79px; }
`;

function PianoRoll() {
  return (
    <PianoPanel>
      <Toolbar>
        <ToolButton $tint="yellow" aria-label="Link"><LinkIcon /></ToolButton>
        <ToolButton $tint="blue" aria-label="Catch"><WalkIcon /></ToolButton>
        <ToolButton aria-label="MIDI in"><MidiIcon dir="in" /></ToolButton>
        <ToolButton $tint="green" aria-label="MIDI out"><MidiIcon dir="out" /></ToolButton>
        <MenuBar>
          {([["Edit", 44], ["Functions", 73], ["View", 51]] as [string, number][]).map(([t, w]) => (
            <MenuButton key={t} $w={w}>{t}<MenuArrow /></MenuButton>
          ))}
        </MenuBar>
        <SelectBox $w={116}>
          <select aria-label="Quantize value"><option>1/16-Note</option></select><Stepper />
        </SelectBox>
        <ToolButton>Q</ToolButton>
        <ToolbarEnd>
          <InfoDisplay><span>384/32</span><span>D3   0 3 2 1</span></InfoDisplay>
          <FieldLabel>Snap:
            <SelectBox $w={75}><select><option>Smart</option></select><Stepper /></SelectBox>
          </FieldLabel>
          <ToolPair>
            <button aria-label="Pointer tool"><PointerIcon /></button>
            <button aria-label="Pencil tool"><PencilIcon /></button>
          </ToolPair>
        </ToolbarEnd>
      </Toolbar>
      <EditorBody>
        <Stack $w={67}>
          <RollHeader><Triangle $color="#b4b4b4" />Global ...</RollHeader>
          <Keyboard />
        </Stack>
        <Stack>
          <RollRuler />
          <RollGrid />
          <Playhead $x={1645} $top={20}><PlayheadCap /></Playhead>
        </Stack>
        <SideColumn>
          <NoteBox aria-label="Piano roll display"><NoteIcon /><MenuArrow /></NoteBox>
          <VScroll $pad={51}><VThumb $h={17} /></VScroll>
          <VZoom><VZoomArt at={32} /><input type="range" aria-label="Piano roll vertical zoom" /></VZoom>
        </SideColumn>
      </EditorBody>
      <RollFooter>
        <StripButton $w={33} aria-label="Track display">
          <svg width="24" height="11" stroke="#333" fill="#333">
            <path d="M2 1.500h14M10 5.500h14M5 9.500h14" />
            <rect x="1" y="0" width="2" height="3" stroke="none" /><rect x="9" y="4" width="3" height="3" stroke="none" /><rect x="4" y="8" width="3" height="3" stroke="none" />
          </svg>
        </StripButton>
        <RollStrip>
          <ScrollStrip>
            <RollPad />
            <HScroll $gap={5}><HThumb $w={37} /></HScroll>
            <StripCell $w={60}><HZoomArt at={41} /><input type="range" aria-label="Piano roll horizontal zoom" /></StripCell>
            <StripCell $w={15} />
          </ScrollStrip>
        </RollStrip>
      </RollFooter>
      <Tabs role="tablist">
        {["Mixer", "Sample Editor", "Piano Roll", "Score", "Hyper Editor"].map((t) => (
          <Tab key={t} role="tab" aria-selected={t === "Piano Roll"} $on={t === "Piano Roll"}>{t}</Tab>
        ))}
      </Tabs>
    </PianoPanel>
  );
}

/* ---------- transport ---------- */

const Transport = styled.footer`
  flex: none;
  height: 47px;
  margin-right: 4px;
  padding: 0 21px 0 401px;
  display: flex;
  align-items: center;
  border: 1px solid #7c7c7c;
  border-top-color: #fff;
  border-radius: 7px;
  background: linear-gradient(#d6d6d6, #a9a9a9);
`;
const Pill = styled.div`
  display: flex;
  gap: 7px;
  padding: 3px;
  border-radius: 16px;
  background: linear-gradient(#9a9a9a, #b4b4b4 60%, #cacaca);
  box-shadow: inset 0 1px 1px #808080, 0 1px #dcdcdc;
`;
const RoundButton = styled.button<{ $tone?: "green" | "cyan" | "stop" }>`
  width: 25px;
  height: 25px;
  padding: 0;
  display: grid;
  place-items: center;
  border: 1px solid #767676;
  border-radius: 50%;
  background: linear-gradient(#ededed, #bcbcbc);
  box-shadow: inset 0 0 0 1px #dadada;
  ${(p) => p.$tone === "green" && css`background: #7fe59a; border-color: #1f9a40; box-shadow: 0 0 3px #35e060;`}
  ${(p) => p.$tone === "cyan" && css`background: #6fcfe4; border-color: #1b87a8; box-shadow: 0 0 3px #40c8ea;`}
  ${(p) => p.$tone === "stop" && css`background: linear-gradient(#b6bdc6, #9da5b0); border-color: #4d5a69;`}
`;
const Lcd = styled.div`
  display: flex;
  height: 37px;
  margin: 0 21px 0 22px;
  border: 1px solid #2c2c2c;
  border-radius: 6px;
  background: linear-gradient(#3a3839, #454344 45%, #3b3a3a 50%, #434142);
  box-shadow: 0 1px #e6e6e6;
  color: #dff5f7;
  font: 13px/15px ${LCD_FONT};
`;
const LcdCell = styled.div<{ $w: number; $cols?: string; $pad?: string }>`
  width: ${(p) => p.$w}px;
  padding: ${(p) => p.$pad ?? "3px 8px 3px 0"};
  display: grid;
  grid-template-columns: ${(p) => p.$cols ?? "1fr"};
  align-content: center;
  justify-content: end;
  text-align: right;
  white-space: nowrap;
  border-right: 1px solid #2b2a2a;
  box-shadow: 1px 0 #555;
  &:last-child { border-right: 0; box-shadow: none; }
`;
const TimeCode = styled.span`
  grid-column: 1 / -1;
`;
const NoText = styled.span`
  text-align: left;
`;
const LoadRow = styled.div`
  display: grid;
  grid-template-columns: 15px 41px;
  align-items: center;
  height: 14px;
  font: 7px/10px "Liberation Mono", monospace;
  text-align: left;
  i { height: 10px; background: repeating-linear-gradient(90deg, #35332c 0 1px, #4b4a40 1px 2px); border: 1px solid #2e2d2a; }
`;
const VolumeRow = styled.div`
  margin-left: auto;
  display: flex;
  align-items: center;
  gap: 5px;
  input {
    appearance: none;
    width: 79px;
    height: 12px;
    background: none;
  }
  input::-webkit-slider-runnable-track {
    height: 4px;
    border: 1px solid #6d6d6d;
    border-radius: 2px;
    background: #b9b9b9;
  }
  input::-webkit-slider-thumb {
    appearance: none;
    width: 11px;
    height: 11px;
    margin-top: -5px;
    border: 1px solid #5d6570;
    border-radius: 50%;
    background: radial-gradient(#f4f7fb, #b9c2cf);
  }
`;

const Glyph = ({ d, stroke, children }: { d?: string; stroke?: string; children?: React.ReactNode }) => (
  <svg width="17" height="17" viewBox="0 0 17 17" fill="#484848">
    {d && <path d={d} />}
    {stroke && <path d={stroke} fill="none" stroke="#484848" strokeWidth="1.500" />}
    {children}
  </svg>
);

function TransportBar() {
  return (
    <Transport>
      <Pill>
        <RoundButton aria-label="Go to beginning"><Glyph d="M13 4v9L5.500 8.500z" stroke="M3.500 4v9" /></RoundButton>
        <RoundButton aria-label="Play from selection">
          <Glyph d="M4 5v7l6-3.500z"><rect x="2" y="3" width="13" height="11" fill="none" stroke="#484848" strokeDasharray="1 1" /></Glyph>
        </RoundButton>
        <RoundButton aria-label="Rewind"><Glyph d="M8 4.500v8L1 8.500zM15.500 4.500v8l-7-4z" /></RoundButton>
        <RoundButton aria-label="Forward"><Glyph d="M9 4.500v8l7-4zM1.500 4.500v8l7-4z" /></RoundButton>
        <RoundButton $tone="stop" aria-label="Stop"><Glyph d="M5 5h7v7H5z" /></RoundButton>
        <RoundButton aria-label="Play"><Glyph d="M6 4.500v8l7-4z" /></RoundButton>
        <RoundButton aria-label="Pause"><Glyph d="M4.500 4h3v9h-3zM9.500 4h3v9h-3z" /></RoundButton>
        <RoundButton aria-label="Record"><Glyph><circle cx="8.500" cy="8.500" r="4.200" /></Glyph></RoundButton>
      </Pill>
      <Lcd>
        <LcdCell $w={126} $cols="41px 22px 22px 32px">
          <TimeCode>00 : 00 : 08 ; 06.10</TimeCode>
          <span>5</span><span>1</span><span>2</span><span>169</span>
        </LcdCell>
        <LcdCell $w={120} $cols="41px 22px 21px 28px">
          <span>0</span><span>4</span><span>2</span><span>1</span>
          <span>32</span><span>4</span><span>2</span><span>1</span>
        </LcdCell>
        <LcdCell $w={71}><span>120.0000</span><span>202</span></LcdCell>
        <LcdCell $w={50} $pad="3px 10px 3px 0"><span>4/4&nbsp;&nbsp;</span><span>/16</span></LcdCell>
        <LcdCell $w={109} $cols="94px" $pad="3px 0"><NoText>No In</NoText><NoText>No Out</NoText></LcdCell>
        <LcdCell $w={70} $cols="63px" $pad="3px 0">
          <LoadRow><span>CPU</span><i /></LoadRow>
          <LoadRow><span>HD</span><i /></LoadRow>
        </LcdCell>
      </Lcd>
      <Pill>
        <RoundButton aria-label="CPU meter">
          <Glyph d="M8.500 2a7 7 0 0 0-6 10.500q1 1.500 2.500.5a5 5 0 0 1 7 0q1.500 1 2.500-.5a7 7 0 0 0-6-10.500z">
            <path d="M8 10L11.500 5" stroke="#ddd" strokeWidth="1.500" />
            <g fill="#ccc"><circle cx="4" cy="8" r=".8" /><circle cx="6" cy="5" r=".8" /><circle cx="13" cy="8" r=".8" /></g>
          </Glyph>
        </RoundButton>
        <RoundButton $tone="green" aria-label="Cycle">
          <Glyph d="M10 2l4 3-4 3zM7 9l-4 3 4 3z" stroke="M3 8.500V7q0-2 2-2h6M14 8.500V10q0 2-2 2H6" />
        </RoundButton>
        <RoundButton aria-label="Replace"><Glyph d="M2.500 5h5L5 8.500zM9.500 6h5L12 2.500zM3 10h11v2H3zM1.500 13h14v1.500h-14z" stroke="M5 2v4M12 5v5" /></RoundButton>
        <RoundButton aria-label="Solo">
          <Glyph>
            <rect x="4" y="2" width="9" height="13" rx="1.500" />
            <text x="8.500" y="12" textAnchor="middle" fill="#ddd" fontSize="9" fontWeight="bold" fontFamily="Liberation Sans, sans-serif">S</text>
          </Glyph>
        </RoundButton>
        <RoundButton $tone="cyan" aria-label="Metronome"><Glyph d="M8.500 2l4 9h-8zM3 12h11v1.500H3zM4 14.500h2V16H4zM11 14.500h2V16h-2z" stroke="M2 4l8 7" /></RoundButton>
      </Pill>
      <VolumeRow>
        <SpeakerIcon waves={1} />
        <input type="range" aria-label="Master output volume" defaultValue={72} />
        <SpeakerIcon waves={3} />
      </VolumeRow>
    </Transport>
  );
}

export default function App() {
  return (
    <>
      <GlobalStyle />
      <Window>
        <Workspace>
          <InspectorPanel />
          <Editors>
            <ArrangeWindow />
            <PianoRoll />
          </Editors>
        </Workspace>
        <TransportBar />
      </Window>
    </>
  );
}
